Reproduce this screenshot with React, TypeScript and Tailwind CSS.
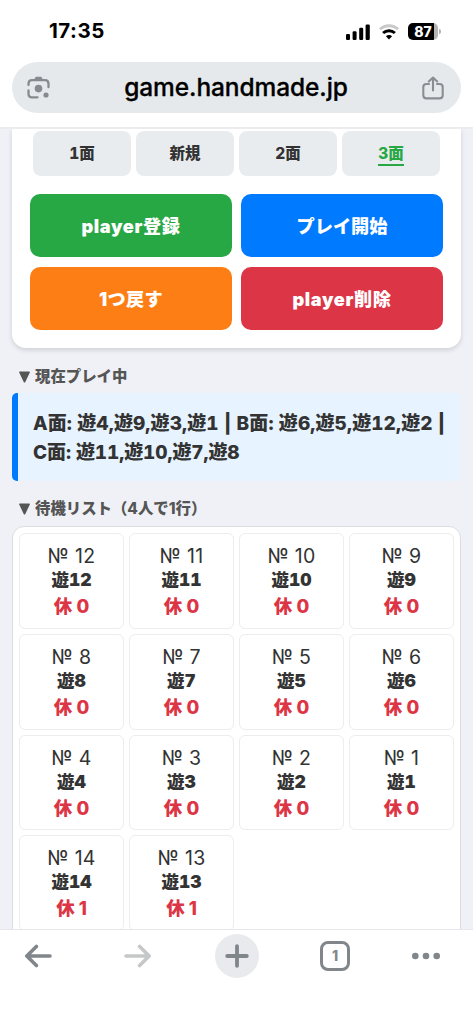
import { clsx } from "clsx";

type Player = { no: number; rest: number };

const tabs = ["1面", "新規", "2面", "3面"];

const actions = [
  { label: "player登録", color: "bg-[#28a745] tracking-[0.6px]" },
  { label: "プレイ開始", color: "bg-[#007bff]" },
  { label: "1つ戻す", color: "bg-[#fd7e14] tracking-[0.3px]" },
  { label: "player削除", color: "bg-[#dc3545] tracking-[0.6px]" },
];

const waiting: Player[] = [
  { no: 12, rest: 0 },
  { no: 11, rest: 0 },
  { no: 10, rest: 0 },
  { no: 9, rest: 0 },
  { no: 8, rest: 0 },
  { no: 7, rest: 0 },
  { no: 5, rest: 0 },
  { no: 6, rest: 0 },
  { no: 4, rest: 0 },
  { no: 3, rest: 0 },
  { no: 2, rest: 0 },
  { no: 1, rest: 0 },
  { no: 14, rest: 1 },
  { no: 13, rest: 1 },
];

export default function App() {
  return (
    <div className="flex h-[1024px] w-[473px] flex-col overflow-hidden bg-white font-['Inter','Noto_Sans_CJK_JP',sans-serif] text-[#333]">
      <StatusBar />
      <AddressBar />
      <main className="flex-1 overflow-hidden border-t-2 border-[#ececef] bg-[#f0f1f6] px-3">
        <ControlCard />
        <SectionTitle className="mt-4">現在プレイ中</SectionTitle>
        <div className="mt-[5px] h-[87.5px] rounded-[5px] border-l-[6px] border-[#007bff] bg-[#e7f3ff] pt-4 pl-[15px] text-[19px] leading-[29px] font-extrabold whitespace-nowrap tabular-nums">
          <p className="tracking-[0.1px]">A面: 遊4,遊9,遊3,遊1 | B面: 遊6,遊5,遊12,遊2 |</p>
          <p className="tracking-[-0.1px]">C面: 遊11,遊10,遊7,遊8</p>
        </div>
        <SectionTitle className="mt-4">待機リスト（4人で1行）</SectionTitle>
        <div className="mt-[5.5px] grid h-[430px] grid-cols-4 content-start gap-[5px] rounded-t-[12px] border border-[#dcdde0] bg-white p-[6px]">
          {waiting.map((player) => (
            <PlayerCell key={player.no} player={player} />
          ))}
        </div>
      </main>
      <BottomBar />
    </div>
  );
}

function StatusBar() {
  return (
    <header className="flex h-[62px] shrink-0 items-center justify-between pt-px pr-[32px] pl-[49px]">
      <span className="text-[20.5px] leading-none font-bold tracking-[0.5px] text-black">17:35</span>
      <div className="flex items-center">
        <svg width="24" height="16" viewBox="0 0 24 16">
          <rect x="0" y="10" width="4" height="6" rx="1.2" />
          <rect x="6.6" y="7.3" width="4" height="8.7" rx="1.2" />
          <rect x="13.2" y="3.8" width="4" height="12.2" rx="1.2" />
          <rect x="19.6" y="0.6" width="4.2" height="15.4" rx="1.2" />
        </svg>
        <svg className="ml-[9px]" width="20" height="16" viewBox="0 0 20 16" fill="none">
          <path d="M1 5.2C6 .6 14 .6 19 5.2" stroke="#c9c9c9" strokeWidth="2.9" />
          <path d="M4.1 9C7.4 5.9 12.6 5.9 15.9 9" stroke="#000" strokeWidth="2.9" />
          <path d="M10 15.4L6.9 12.2C8.7 10.6 11.3 10.6 13.1 12.2Z" fill="#000" />
        </svg>
        <div className="ml-[9px] flex h-[17px] w-[30px] items-center justify-center overflow-hidden rounded-[5px] bg-linear-to-r from-black from-[87%] to-[#b5b5b5] to-[87%] text-[14px] leading-none font-extrabold text-white">
          87
        </div>
        <span className="ml-px h-[5px] w-[2px] rounded-r-full bg-[#b5b5b5]" />
      </div>
    </header>
  );
}

function AddressBar() {
  return (
    <div className="h-[65px] shrink-0 px-3">
      <div className="flex h-[51px] items-center justify-between rounded-full bg-[#e5e9ec] pr-[17px] pl-[15px]">
        <svg width="23" height="23" viewBox="0 0 23 23" fill="none" stroke="#858b8e" strokeWidth="2.3" strokeLinecap="round">
          <path d="M1.5 9V7.8Q1.5 4.2 5 4.2H18Q21.5 4.2 21.5 7.8V11.2M1.5 14.5V17.5Q1.5 21.3 5 21.3H10.5" />
          <path d="M7 4.2L8.2 1.5Q8.6 .8 9.3 .8H13.7Q14.4 .8 14.8 1.5L16 4.2Z" fill="#858b8e" stroke="none" />
          <circle cx="11.5" cy="12.6" r="3.8" fill="#858b8e" stroke="none" />
          <circle cx="19" cy="19" r="2.6" fill="#858b8e" stroke="none" />
        </svg>
        <span className="text-[24.5px] leading-none font-medium tracking-[-0.1px] text-black [-webkit-text-stroke:0.3px_black]">
          game.handmade.jp
        </span>
        <svg width="22" height="24" viewBox="0 0 22 24" fill="none" stroke="#8a8d92" strokeWidth="2.1" strokeLinecap="round" strokeLinejoin="round">
          <path d="M7 8H4.5Q1.3 8 1.3 11V19.2Q1.3 22.4 4.5 22.4H17.5Q20.7 22.4 20.7 19.2V11Q20.7 8 17.5 8H15" />
          <path d="M11 14.5V1.8M6.8 5.5L11 1.5L15.2 5.5" />
        </svg>
      </div>
    </div>
  );
}

function ControlCard() {
  return (
    <section className="h-[219px] rounded-b-[14px] bg-white px-[18px] pt-[2px] shadow-[0_2px_5px_rgba(0,0,0,0.14)]">
      <div className="grid grid-cols-4 gap-[5px] px-[3px]">
        {tabs.map((tab, i) => (
          <div
            key={tab}
            className="flex h-[45px] items-center justify-center rounded-[8px] bg-[#e9ecef] text-[15.5px] leading-none font-extrabold tabular-nums"
          >
            <span className={clsx(i === 3 && "mt-[5px] border-b-[2.5px] border-[#28a745] pb-[3px] text-[#28a745]")}>
              {tab}
            </span>
          </div>
        ))}
      </div>
      <div className="mt-[18px] grid grid-cols-2 gap-x-[9px] gap-y-[10px]">
        {actions.map(({ label, color }) => (
          <button
            key={label}
            className={clsx("h-[63px] rounded-[10px] pt-[2px] text-[18.2px] leading-none font-black text-white", color)}
          >
            {label}
          </button>
        ))}
      </div>
    </section>
  );
}

function SectionTitle({ className, children }: { className?: string; children: string }) {
  return (
    <h2 className={clsx("flex h-6 items-center pt-px pl-[7px] text-[15.4px] leading-none font-extrabold text-[#555]", className)}>
      <svg className="mr-[5px]" width="11" height="12" viewBox="0 0 11 12" fill="#555">
        <path d="M.7 .5H10.3Q11.2 .5 10.8 1.4L6.3 11Q5.5 12.2 4.7 11L.2 1.4Q-.2 .5 .7 .5Z" />
      </svg>
      {children}
    </h2>
  );
}

function PlayerCell({ player }: { player: Player }) {
  return (
    <div className="flex h-[95.8px] flex-col items-center rounded-[6px] border border-[#ededee] pt-[10px] leading-6 whitespace-nowrap">
      <span className="h-6 text-[19.5px] tracking-[0.3px]">№ {player.no}</span>
      <span className="h-6 text-[17.5px] font-black tabular-nums">遊{player.no}</span>
      <span className="mt-[2px] h-6 text-[18.5px] font-extrabold text-[#dc3545]">休 {player.rest}</span>
    </div>
  );
}

function BottomBar() {
  return (
    <nav className="flex h-[95px] shrink-0 items-start border-t border-[#e6e7ea] bg-white pt-1 pl-[24px]">
      <div className="flex h-11 w-7 items-center">
        <Arrow color="#80868a" />
      </div>
      <div className="ml-[72px] flex h-11 w-7 items-center">
        <Arrow color="#c6c7c8" flipped />
      </div>
      <div className="ml-[62.5px] flex size-11 items-center justify-center rounded-full bg-[#e8eaee]">
        <svg width="24" height="24" viewBox="0 0 24 24" stroke="#80868a" strokeWidth="3.8" strokeLinecap="round">
          <path d="M12 2.2V21.8M2.2 12H21.8" />
        </svg>
      </div>
      <div className="mt-[7px] ml-[61.5px] flex size-[30px] items-center justify-center rounded-[8px] border-[3px] border-[#80868a] text-[14px] leading-none font-extrabold text-[#80868a]">
        1
      </div>
      <svg className="mt-[18px] ml-[61.5px]" width="28" height="8" viewBox="0 0 28 8" fill="#80868a">
        <circle cx="3.3" cy="4" r="3.3" />
        <circle cx="14" cy="4" r="3.3" />
        <circle cx="24.7" cy="4" r="3.3" />
      </svg>
    </nav>
  );
}

function Arrow({ color, flipped }: { color: string; flipped?: boolean }) {
  return (
    <svg
      className={clsx(flipped && "rotate-180")}
      width="28"
      height="24"
      viewBox="0 0 28 24"
      fill="none"
      stroke={color}
      strokeWidth="3.6"
      strokeLinecap="round"
      strokeLinejoin="round"
    >
      <path d="M26 12H2.8M12.4 2.5L2.8 12L12.4 21.5" />
    </svg>
  );
}
